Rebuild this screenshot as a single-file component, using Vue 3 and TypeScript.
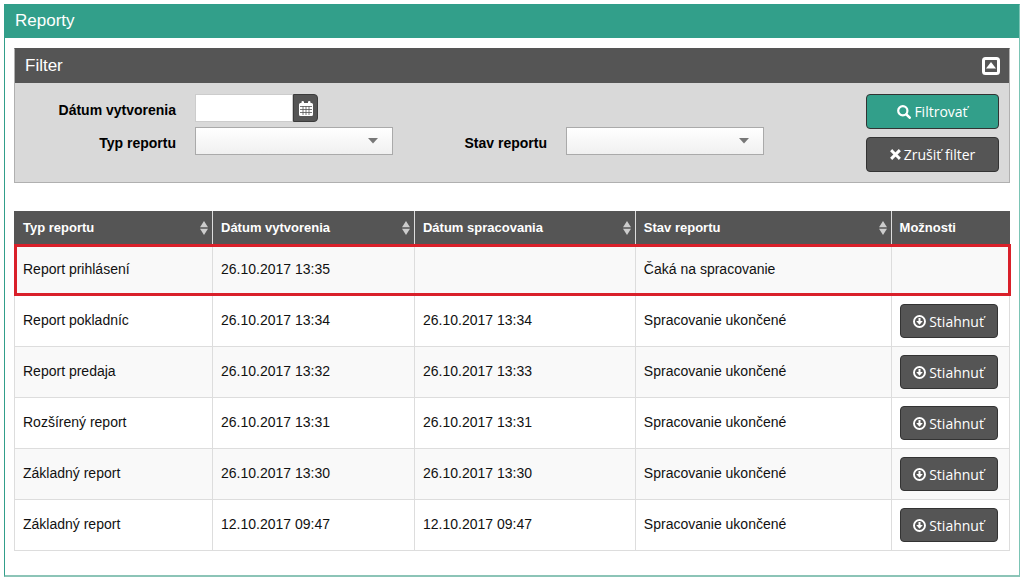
<script setup lang="ts">
import { computed, ref } from 'vue'

interface Report {
  type: string
  created: string
  processed: string
  state: string
}

type Key = keyof Report

const columns: { key: Key; label: string }[] = [
  { key: 'type', label: 'Typ reportu' },
  { key: 'created', label: 'Dátum vytvorenia' },
  { key: 'processed', label: 'Dátum spracovania' },
  { key: 'state', label: 'Stav reportu' },
]

const done = 'Spracovanie ukončené'
const pending = 'Čaká na spracovanie'

const reports: Report[] = [
  { type: 'Report prihlásení', created: '26.10.2017 13:35', processed: '', state: pending },
  { type: 'Report pokladníc', created: '26.10.2017 13:34', processed: '26.10.2017 13:34', state: done },
  { type: 'Report predaja', created: '26.10.2017 13:32', processed: '26.10.2017 13:33', state: done },
  { type: 'Rozšírený report', created: '26.10.2017 13:31', processed: '26.10.2017 13:31', state: done },
  { type: 'Základný report', created: '26.10.2017 13:30', processed: '26.10.2017 13:30', state: done },
  { type: 'Základný report', created: '12.10.2017 09:47', processed: '12.10.2017 09:47', state: done },
]

const types = [...new Set(reports.map((r) => r.type))]
const states = [pending, done]

const open = ref(true)
const date = ref('')
const type = ref('')
const state = ref('')
const applied = ref({ date: '', type: '', state: '' })
const sortKey = ref<Key | null>(null)
const ascending = ref(true)

const rows = computed(() => {
  const f = applied.value
  const list = reports.filter(
    (r) => r.created.startsWith(f.date) && (!f.type || r.type === f.type) && (!f.state || r.state === f.state),
  )
  const key = sortKey.value
  if (key) list.sort((a, b) => a[key].localeCompare(b[key], 'sk') * (ascending.value ? 1 : -1))
  return list
})

function apply() {
  applied.value = { date: date.value, type: type.value, state: state.value }
}

function clear() {
  date.value = type.value = state.value = ''
  apply()
}

function sortBy(key: Key) {
  ascending.value = sortKey.value === key ? !ascending.value : true
  sortKey.value = key
}
</script>

<template>
  <main class="panel">
    <h1 class="panel-title">Reporty</h1>
    <div class="panel-body">
      <section class="filter">
        <header class="filter-head">
          <h2>Filter</h2>
          <button class="toggle" type="button" aria-label="Zbaliť filter" :aria-expanded="open" @click="open = !open">
            <svg viewBox="0 0 18 18" width="18" height="18" aria-hidden="true">
              <rect x="1.5" y="1.5" width="15" height="15" rx="2" fill="none" stroke="#fff" stroke-width="3" />
              <path d="M9 5 L14 11.500 H4 Z" fill="#fff" />
            </svg>
          </button>
        </header>
        <form v-if="open" class="filter-body" @submit.prevent="apply">
          <div class="fields">
            <label for="date">Dátum vytvorenia</label>
            <div class="date">
              <input id="date" v-model="date" type="text" autocomplete="off" />
              <button type="button" aria-label="Kalendár">
                <svg viewBox="0 0 14 15" width="14" height="15" aria-hidden="true">
                  <path
                    fill="#fff"
                    fill-rule="evenodd"
                    d="M1.500 2H2.500V1Q2.500 0 3.700 0T5 1V2H9V1Q9 0 10.200 0T11.500 1V2H12.500Q14 2 14 3.500V13.500Q14 15 12.500 15H1.500Q0 15 0 13.500V3.500Q0 2 1.500 2Z"
                  />
                  <path d="M1 5.500H13M1 8.500H13M1 11.500H13M4 5V14M7 5V14M10 5V14" stroke="#555" stroke-width=".8" />
                </svg>
              </button>
            </div>
            <label for="type" class="next">Typ reportu</label>
            <div class="select">
              <select id="type" v-model="type">
                <option value=""></option>
                <option v-for="t in types" :key="t">{{ t }}</option>
              </select>
              <svg viewBox="0 0 10 6" width="10" height="6" aria-hidden="true"><path d="M0 0H10L5 5.500Z" fill="#777" /></svg>
            </div>
            <label for="state">Stav reportu</label>
            <div class="select">
              <select id="state" v-model="state">
                <option value=""></option>
                <option v-for="s in states" :key="s">{{ s }}</option>
              </select>
              <svg viewBox="0 0 10 6" width="10" height="6" aria-hidden="true"><path d="M0 0H10L5 5.500Z" fill="#777" /></svg>
            </div>
          </div>
          <div class="actions">
            <button class="btn primary" type="submit">
              <svg viewBox="0 0 14 14" width="14" height="14" aria-hidden="true">
                <circle cx="5.800" cy="5.800" r="4.600" fill="none" stroke="#fff" stroke-width="2.200" />
                <path d="M9.300 9.300L12.700 12.700" stroke="#fff" stroke-width="2.600" stroke-linecap="round" />
              </svg>
              <span>Filtrovať</span>
            </button>
            <button class="btn" type="button" @click="clear">
              <svg viewBox="0 0 11 11" width="11" height="11" aria-hidden="true">
                <path d="M2.200 2.200L8.800 8.800M8.800 2.200L2.200 8.800" stroke="#fff" stroke-width="3" stroke-linecap="square" />
              </svg>
              <span>Zrušiť filter</span>
            </button>
          </div>
        </form>
      </section>

      <table>
        <colgroup>
          <col class="c-type" />
          <col class="c-created" />
          <col class="c-processed" />
          <col class="c-state" />
          <col />
        </colgroup>
        <thead>
          <tr>
            <th v-for="c in columns" :key="c.key" scope="col">
              <button class="sort" type="button" @click="sortBy(c.key)">
                <span>{{ c.label }}</span>
                <svg viewBox="0 0 8 14" width="8" height="14" aria-hidden="true">
                  <path d="M4 0L8 6.300H0ZM0 7.700H8L4 14Z" fill="#ccc" />
                </svg>
              </button>
            </th>
            <th scope="col">Možnosti</th>
          </tr>
        </thead>
        <tbody>
          <tr v-for="(r, i) in rows" :key="i" :class="{ pending: !r.processed }">
            <td>{{ r.type }}</td>
            <td>{{ r.created }}</td>
            <td>{{ r.processed }}</td>
            <td>{{ r.state }}</td>
            <td class="options">
              <button v-if="r.processed" class="btn download" type="button">
                <svg viewBox="0 0 13 13" width="13" height="13" aria-hidden="true">
                  <circle cx="6.500" cy="6.500" r="5.500" fill="none" stroke="#fff" stroke-width="1.900" />
                  <path d="M5.500 3H7.500V6H9.800L6.500 9.800L3.200 6H5.500Z" fill="#fff" />
                </svg>
                <span>Stiahnuť</span>
              </button>
            </td>
          </tr>
        </tbody>
      </table>
    </div>
  </main>
</template>

<style>
body {
  background: #fff;
}
</style>

<style scoped>
* {
  box-sizing: border-box;
}

.panel {
  margin: 4px 3px 4px 4px;
  border: 1px solid #319e8a;
  border-right-color: #7cc4b5;
  border-bottom: 2px solid #8cc4b7;
  font-family: "Liberation Sans", Arial, sans-serif;
  font-size: 14px;
  color: #111;
}

h1,
h2 {
  margin: 0;
  font-size: 17px;
  font-weight: 400;
  color: #fff;
}

.panel-title {
  padding: 0 10px 2px;
  line-height: 31px;
  background: #329f8a;
}

.panel-body {
  padding: 10px 9px 24px;
}

.filter {
  border: 1px solid #b0b0b0;
  border-top-color: #555;
  background: #d9d9d9;
}

.filter-head {
  display: flex;
  align-items: center;
  justify-content: space-between;
  height: 34px;
  padding: 0 9px 0 10px;
  background: #555;
}

.toggle {
  display: flex;
  padding: 0;
  border: 0;
  background: none;
}

.filter-body {
  display: flex;
  padding: 11px 10px 10px 0;
}

.fields {
  flex: 1;
  display: grid;
  grid-template-columns: 161fr 198px 135fr 198px;
  grid-auto-rows: 28px;
  align-content: start;
  align-items: center;
  gap: 5px 19px;
  padding-right: 102px;
}

.fields label {
  padding-top: 3px;
  text-align: right;
  font-weight: 700;
  color: #000;
}

.fields .next {
  grid-column: 1;
}

.date {
  display: flex;
  height: 28px;
}

.date input {
  width: 98px;
  border: 1px solid #ccc;
  padding: 0 6px;
  background: #fff;
  font: inherit;
}

.date button {
  display: flex;
  align-items: center;
  justify-content: center;
  width: 25px;
  padding: 0;
  border: 1px solid #3c3c3c;
  border-radius: 0 4px 4px 0;
  background: #555;
}

.select {
  position: relative;
  height: 28px;
}

.select select {
  appearance: none;
  width: 100%;
  height: 100%;
  padding: 0 30px 0 8px;
  border: 1px solid #aaa;
  border-radius: 0;
  background: linear-gradient(#fff, #f0f0f0);
  font: inherit;
}

.select svg {
  position: absolute;
  top: 11px;
  right: 15px;
  pointer-events: none;
}

.actions {
  display: flex;
  flex-direction: column;
  gap: 8px;
  width: 133px;
}

.btn {
  display: flex;
  align-items: center;
  justify-content: center;
  gap: 3px;
  height: 35px;
  padding: 0 12px;
  border: 1px solid #333;
  border-radius: 4px;
  background: #555;
  color: #fff;
  font: 14px "Open Sans", "Noto Sans", sans-serif;
}

.primary {
  background: #329f8a;
}

.download {
  width: 98px;
  height: 34px;
  padding-top: 2px;
}

table {
  width: 100%;
  margin-top: 28px;
  border-collapse: collapse;
  table-layout: fixed;
}

.c-type {
  width: 19.9%;
}

.c-created {
  width: 20.3%;
}

.c-processed {
  width: 22.2%;
}

.c-state {
  width: 25.7%;
}

th {
  height: 34px;
  padding: 0 4px 0 8px;
  border-left: 1px solid #ddd;
  background: #555;
  color: #fff;
  font-size: 13px;
  text-align: left;
}

th:first-child {
  border-left-color: #555;
}

.sort {
  display: flex;
  align-items: center;
  justify-content: space-between;
  width: 100%;
  padding: 0;
  border: 0;
  background: none;
  color: inherit;
  font: inherit;
}

td {
  height: 51px;
  padding: 0 8px 2px;
  border: 1px solid #ddd;
}

.options {
  padding-bottom: 0;
}

tbody tr:nth-child(odd) {
  background: #f9f9f9;
}

tbody tr:nth-child(even) {
  background: #fff;
}

.pending {
  outline: 3px solid #d9202a;
  outline-offset: -2px;
}

.pending td {
  height: 50px;
}
</style>
